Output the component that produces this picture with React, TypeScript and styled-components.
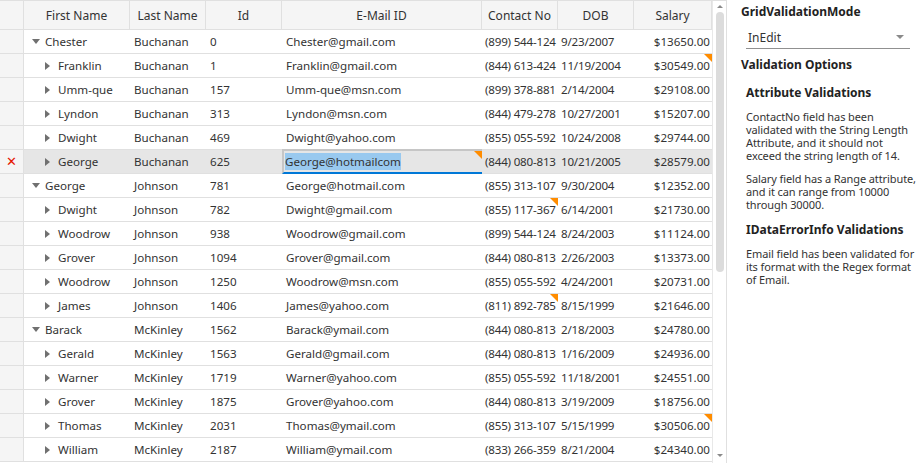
import { createGlobalStyle, styled } from 'styled-components';

const GlobalStyle = createGlobalStyle`
  html, body {
    margin: 0;
    padding: 0;
    background: #ffffff;
  }
  body {
    font-family: 'Noto Sans', 'Open Sans', sans-serif;
    font-size: 12px;
    color: #333333;
  }
`;

const COLS = '24px 106px 76px 76px 200px 76px 76px 78px';

interface Person {
  first: string;
  last: string;
  id: number;
  email: string;
  contact: string;
  dob: string;
  salary: string;
  level: 0 | 1;
  err?: 'email' | 'contact' | 'salary';
  editing?: boolean;
}

// contact numbers are shown cut off by the column, as in the grid
const rows: Person[] = [
  { first: 'Chester', last: 'Buchanan', id: 0, email: 'Chester@gmail.com', contact: '(899) 544-124', dob: '9/23/2007', salary: '$13650.00', level: 0 },
  { first: 'Franklin', last: 'Buchanan', id: 1, email: 'Franklin@gmail.com', contact: '(844) 613-424', dob: '11/19/2004', salary: '$30549.00', level: 1, err: 'salary' },
  { first: 'Umm-que', last: 'Buchanan', id: 157, email: 'Umm-que@msn.com', contact: '(899) 378-881', dob: '2/14/2004', salary: '$29108.00', level: 1 },
  { first: 'Lyndon', last: 'Buchanan', id: 313, email: 'Lyndon@msn.com', contact: '(844) 479-278', dob: '10/27/2001', salary: '$15207.00', level: 1 },
  { first: 'Dwight', last: 'Buchanan', id: 469, email: 'Dwight@yahoo.com', contact: '(855) 055-592', dob: '10/24/2008', salary: '$29744.00', level: 1 },
  { first: 'George', last: 'Buchanan', id: 625, email: 'George@hotmailcom', contact: '(844) 080-813', dob: '10/21/2005', salary: '$28579.00', level: 1, err: 'email', editing: true },
  { first: 'George', last: 'Johnson', id: 781, email: 'George@hotmail.com', contact: '(855) 313-107', dob: '9/30/2004', salary: '$12352.00', level: 0 },
  { first: 'Dwight', last: 'Johnson', id: 782, email: 'Dwight@gmail.com', contact: '(855) 117-367', dob: '6/14/2001', salary: '$21730.00', level: 1, err: 'contact' },
  { first: 'Woodrow', last: 'Johnson', id: 938, email: 'Woodrow@gmail.com', contact: '(899) 544-124', dob: '8/24/2003', salary: '$11124.00', level: 1 },
  { first: 'Grover', last: 'Johnson', id: 1094, email: 'Grover@gmail.com', contact: '(844) 080-813', dob: '2/26/2003', salary: '$13373.00', level: 1 },
  { first: 'Woodrow', last: 'Johnson', id: 1250, email: 'Woodrow@msn.com', contact: '(855) 055-592', dob: '4/24/2001', salary: '$20731.00', level: 1 },
  { first: 'James', last: 'Johnson', id: 1406, email: 'James@yahoo.com', contact: '(811) 892-785', dob: '8/15/1999', salary: '$21646.00', level: 1, err: 'contact' },
  { first: 'Barack', last: 'McKinley', id: 1562, email: 'Barack@ymail.com', contact: '(844) 080-813', dob: '2/18/2003', salary: '$24780.00', level: 0 },
  { first: 'Gerald', last: 'McKinley', id: 1563, email: 'Gerald@gmail.com', contact: '(844) 080-813', dob: '1/16/2009', salary: '$24936.00', level: 1 },
  { first: 'Warner', last: 'McKinley', id: 1719, email: 'Warner@yahoo.com', contact: '(855) 055-592', dob: '11/18/2001', salary: '$24551.00', level: 1 },
  { first: 'Grover', last: 'McKinley', id: 1875, email: 'Grover@yahoo.com', contact: '(844) 080-813', dob: '3/19/2009', salary: '$18756.00', level: 1 },
  { first: 'Thomas', last: 'McKinley', id: 2031, email: 'Thomas@ymail.com', contact: '(855) 313-107', dob: '5/15/1999', salary: '$30506.00', level: 1, err: 'salary' },
  { first: 'William', last: 'McKinley', id: 2187, email: 'William@ymail.com', contact: '(833) 266-359', dob: '8/21/2004', salary: '$24340.00', level: 1 },
];

const headers = ['First Name', 'Last Name', 'Id', 'E-Mail ID', 'Contact No', 'DOB', 'Salary'];

const App = () => {
  return (
    <>
      <GlobalStyle />
      <StPage>
        <StGrid>
          <StTable>
            <StHeaderRow>
              <StHeaderCell />
              {headers.map((h) => (
                <StHeaderCell key={h}>{h}</StHeaderCell>
              ))}
            </StHeaderRow>
            {rows.map((r, i) => (
              <StRow key={i} $current={!!r.editing}>
                <StIndicator>{r.editing && <StErrorMark>✕</StErrorMark>}</StIndicator>
                <StCell $indent={r.level === 0 ? 8 : 21}>
                  {r.level === 0 ? <StDownArrow /> : <StRightArrow />}
                  {r.first}
                </StCell>
                <StCell>{r.last}</StCell>
                <StCell>{r.id}</StCell>
                {r.editing ? (
                  <StEditCell $error>
                    <StSelected>{r.email}</StSelected>
                  </StEditCell>
                ) : (
                  <StCell $error={r.err === 'email'}>{r.email}</StCell>
                )}
                <StCell $error={r.err === 'contact'} $tight>
                  {r.contact}
                </StCell>
                <StCell $tight>{r.dob}</StCell>
                <StCell $right $error={r.err === 'salary'}>
                  {r.salary}
                </StCell>
              </StRow>
            ))}
          </StTable>
          <StScrollBar>
            <StScrollUp />
            <StTrack>
              <StThumb />
            </StTrack>
            <StScrollDown />
          </StScrollBar>
        </StGrid>

        <StSide>
          <StTitle>GridValidationMode</StTitle>
          <StSelect>
            <span>InEdit</span>
            <StSelectArrow />
          </StSelect>
          <StTitle>Validation Options</StTitle>
          <StSection>
            <StSubTitle>Attribute Validations</StSubTitle>
            <StText>
              ContactNo field has been validated with the String Length Attribute, and it should not exceed the string
              length of 14.
            </StText>
            <StText>Salary field has a Range attribute, and it can range from 10000 through 30000.</StText>
            <StSubTitle>IDataErrorInfo Validations</StSubTitle>
            <StText>Email field has been validated for its format with the Regex format of Email.</StText>
          </StSection>
        </StSide>
      </StPage>
    </>
  );
};

export default App;

const StPage = styled.div`
  display: flex;
  width: 916px;
  height: 464px;
  overflow: hidden;
`;

const StGrid = styled.div`
  display: flex;
  flex-shrink: 0;

  width: 727px;
  height: 463px;

  border-top: 1px solid #e0e0e0;
  border-right: 1px solid #e0e0e0;
  box-sizing: border-box;
  overflow: hidden;
`;

const StTable = styled.div`
  display: flex;
  flex-direction: column;
  width: 712px;
  font-size: 11.6px;
`;

const StHeaderRow = styled.div`
  display: grid;
  grid-template-columns: ${COLS};
  height: 28px;

  background-color: #f5f5f5;
  border-bottom: 1px solid #e0e0e0;
  flex-shrink: 0;
`;

const StHeaderCell = styled.div`
  display: flex;
  justify-content: center;
  align-items: center;

  border-right: 1px solid #e0e0e0;
  color: #333333;
  font-size: 12px;
  white-space: nowrap;
`;

const StRow = styled.div<{ $current?: boolean }>`
  display: grid;
  grid-template-columns: ${COLS};
  height: 24px;
  flex-shrink: 0;

  background-color: ${({ $current }) => ($current ? '#e6e6e6' : '#ffffff')};
`;

const StIndicator = styled.div`
  display: flex;
  justify-content: center;
  align-items: center;

  background-color: #f5f5f5;
  border-right: 1px solid #e0e0e0;
  border-bottom: 1px solid #e0e0e0;
`;

const StErrorMark = styled.span`
  color: #e51400;
  font-size: 13px;
  font-family: 'DejaVu Sans', sans-serif;
  line-height: 1;
`;

const StCell = styled.div<{ $right?: boolean; $error?: boolean; $indent?: number; $tight?: boolean }>`
  display: flex;
  align-items: center;
  justify-content: ${({ $right }) => ($right ? 'flex-end' : 'flex-start')};

  position: relative;
  padding: ${({ $indent, $right, $tight }) =>
    $right ? '0 2px 0 0' : `0 0 0 ${$indent ?? ($tight ? 3 : 4)}px`};

  border-bottom: 1px solid #e0e0e0;
  white-space: nowrap;
  overflow: hidden;
  letter-spacing: ${({ $tight }) => ($tight ? '-0.2px' : 'normal')};

  &::after {
    content: '';
    display: ${({ $error }) => ($error ? 'block' : 'none')};
    position: absolute;
    top: 0;
    right: 0;

    border-top: 8px solid #ff8c00;
    border-left: 8px solid transparent;
  }
`;

const StEditCell = styled(StCell)`
  padding-left: 1px;
  margin-top: -1px;

  border-top: 2px solid #c6c6c6;
  border-left: 2px solid #c6c6c6;
  border-bottom: 2px solid #0078d7;
  box-sizing: border-box;
`;

const StSelected = styled.span`
  background-color: #99c9ef;
  color: #333333;
  line-height: 17px;
`;

const StDownArrow = styled.span`
  width: 0;
  height: 0;
  margin-right: 5px;

  border-top: 5px solid #707070;
  border-left: 4px solid transparent;
  border-right: 4px solid transparent;
`;

const StRightArrow = styled.span`
  width: 0;
  height: 0;
  margin-right: 8px;

  border-left: 5px solid #707070;
  border-top: 4px solid transparent;
  border-bottom: 4px solid transparent;
`;

const StScrollBar = styled.div`
  display: flex;
  flex-direction: column;
  align-items: center;

  width: 14px;
  padding-top: 4px;
  background-color: #ffffff;
  border-left: 1px solid #e8e8e8;
`;

const StScrollUp = styled.span`
  width: 0;
  height: 0;
  margin-bottom: 4px;

  border-bottom: 3px solid #8a8a8a;
  border-left: 3px solid transparent;
  border-right: 3px solid transparent;
`;

const StScrollDown = styled.span`
  width: 0;
  height: 0;
  margin: 4px 0 6px;

  border-top: 3px solid #8a8a8a;
  border-left: 3px solid transparent;
  border-right: 3px solid transparent;
`;

const StTrack = styled.div`
  flex: 1;
  width: 8px;
`;

const StThumb = styled.div`
  width: 8px;
  height: 260px;
  border-radius: 4px;
  background-color: #dcdcdc;
`;

const StSide = styled.div`
  display: flex;
  flex-direction: column;
  flex: 1;
  min-width: 0;

  padding: 3px 0 0 14px;
`;

const StTitle = styled.div`
  font-weight: 700;
  font-size: 12px;
  line-height: 18px;
  color: #222222;
`;

const StSelect = styled.div`
  display: flex;
  justify-content: space-between;
  align-items: center;

  height: 22px;
  margin: 5px 6px 7px 5px;
  padding: 0 6px 0 2px;

  border-bottom: 1px solid #909090;
  color: #333333;
`;

const StSelectArrow = styled.span`
  width: 0;
  height: 0;

  border-top: 4px solid #8a8a8a;
  border-left: 4px solid transparent;
  border-right: 4px solid transparent;
`;

const StSection = styled.div`
  display: flex;
  flex-direction: column;
  padding: 10px 0 0 5px;
`;

const StSubTitle = styled.div`
  font-weight: 700;
  font-size: 12px;
  line-height: 18px;
  color: #222222;
  margin-bottom: 8px;
  white-space: nowrap;
`;

const StText = styled.p`
  margin: 0 0 10px;
  font-size: 11px;
  line-height: 13px;
  letter-spacing: -0.1px;
  color: #333333;
`;
